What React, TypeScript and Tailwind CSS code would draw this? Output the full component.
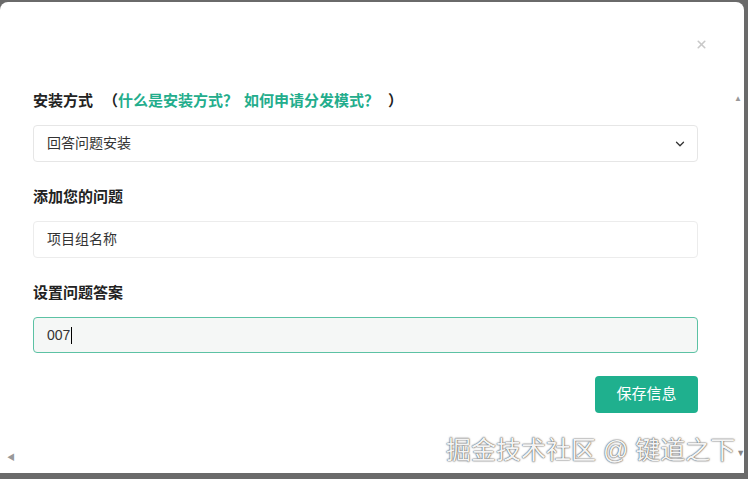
import { ChevronDown, X } from "lucide-react";

const fields = [
  { label: "添加您的问题", value: "项目组名称" },
];

export default function App() {
  return (
    <div className="w-[748px] h-[479px] overflow-hidden bg-[#6a6a6a] font-['Liberation_Sans','Noto_Sans_CJK_SC',sans-serif] text-[#333]">
      <div className="relative mt-[2px] w-[744px] h-[471px] rounded-t-[8px] bg-white">
        <div className="flex justify-end pt-[36px] pr-[36px]">
          <X size={13} strokeWidth={3} className="text-[#c8c8c8]" />
        </div>

        <div className="pl-[33px] pr-[46px] mt-[40px]">
          <div className="h-5 leading-5 text-[15px] font-bold text-[#222] flex">
            <span>安装方式</span>
            <span className="ml-[10px]">（</span>
            <span className="text-[#23ad8c]">什么是安装方式？</span>
            <span className="ml-[6px] text-[#23ad8c]">如何申请分发模式？</span>
            <span className="ml-[9px]">）</span>
          </div>
          <div className="mt-[14px] h-[37px] rounded-[4px] border border-[#e6e6e6] flex items-center justify-between pl-[13px] pr-[10px] text-[14px]">
            <span>回答问题安装</span>
            <ChevronDown size={14} strokeWidth={2.2} className="text-[#333]" />
          </div>

          {fields.map((f) => (
            <div key={f.label}>
              <div className="mt-[25px] h-5 leading-5 text-[15px] font-bold text-[#222]">{f.label}</div>
              <div className="mt-[14px] h-[37px] rounded-[4px] border border-[#ececec] flex items-center pl-[13px] text-[14px]">
                {f.value}
              </div>
            </div>
          ))}

          <div className="mt-[25px] h-5 leading-5 text-[15px] font-bold text-[#222]">设置问题答案</div>
          <div className="mt-[14px] h-[36px] rounded-[4px] border border-[#5cc2a4] bg-[#f5f7f6] flex items-center pl-[13px] text-[14px]">
            <span>007</span>
            <span className="ml-[1px] w-px h-[17px] bg-black" />
          </div>

          <div className="mt-[23px] flex justify-end">
            <button className="w-[103px] h-[37px] rounded-[4px] bg-[#1fb08e] text-white text-[15px]">保存信息</button>
          </div>
        </div>

        <div className="absolute left-[446px] top-[429px] flex items-center text-[25px] leading-[32px] text-[#f4f4f4] whitespace-nowrap [text-shadow:0_0_1px_#444,0_0_2px_#666]">
          掘金技术社区 @ 键道之下
          <span className="ml-[1px] mt-[6px] text-[9px] text-[#888] [text-shadow:none]">▼</span>
        </div>
        <span className="absolute left-[734px] top-[91px] text-[8px] text-[#999]">▲</span>
        <span className="absolute left-[7px] top-[450px] text-[8px] text-[#999]">◀</span>
      </div>
    </div>
  );
}
